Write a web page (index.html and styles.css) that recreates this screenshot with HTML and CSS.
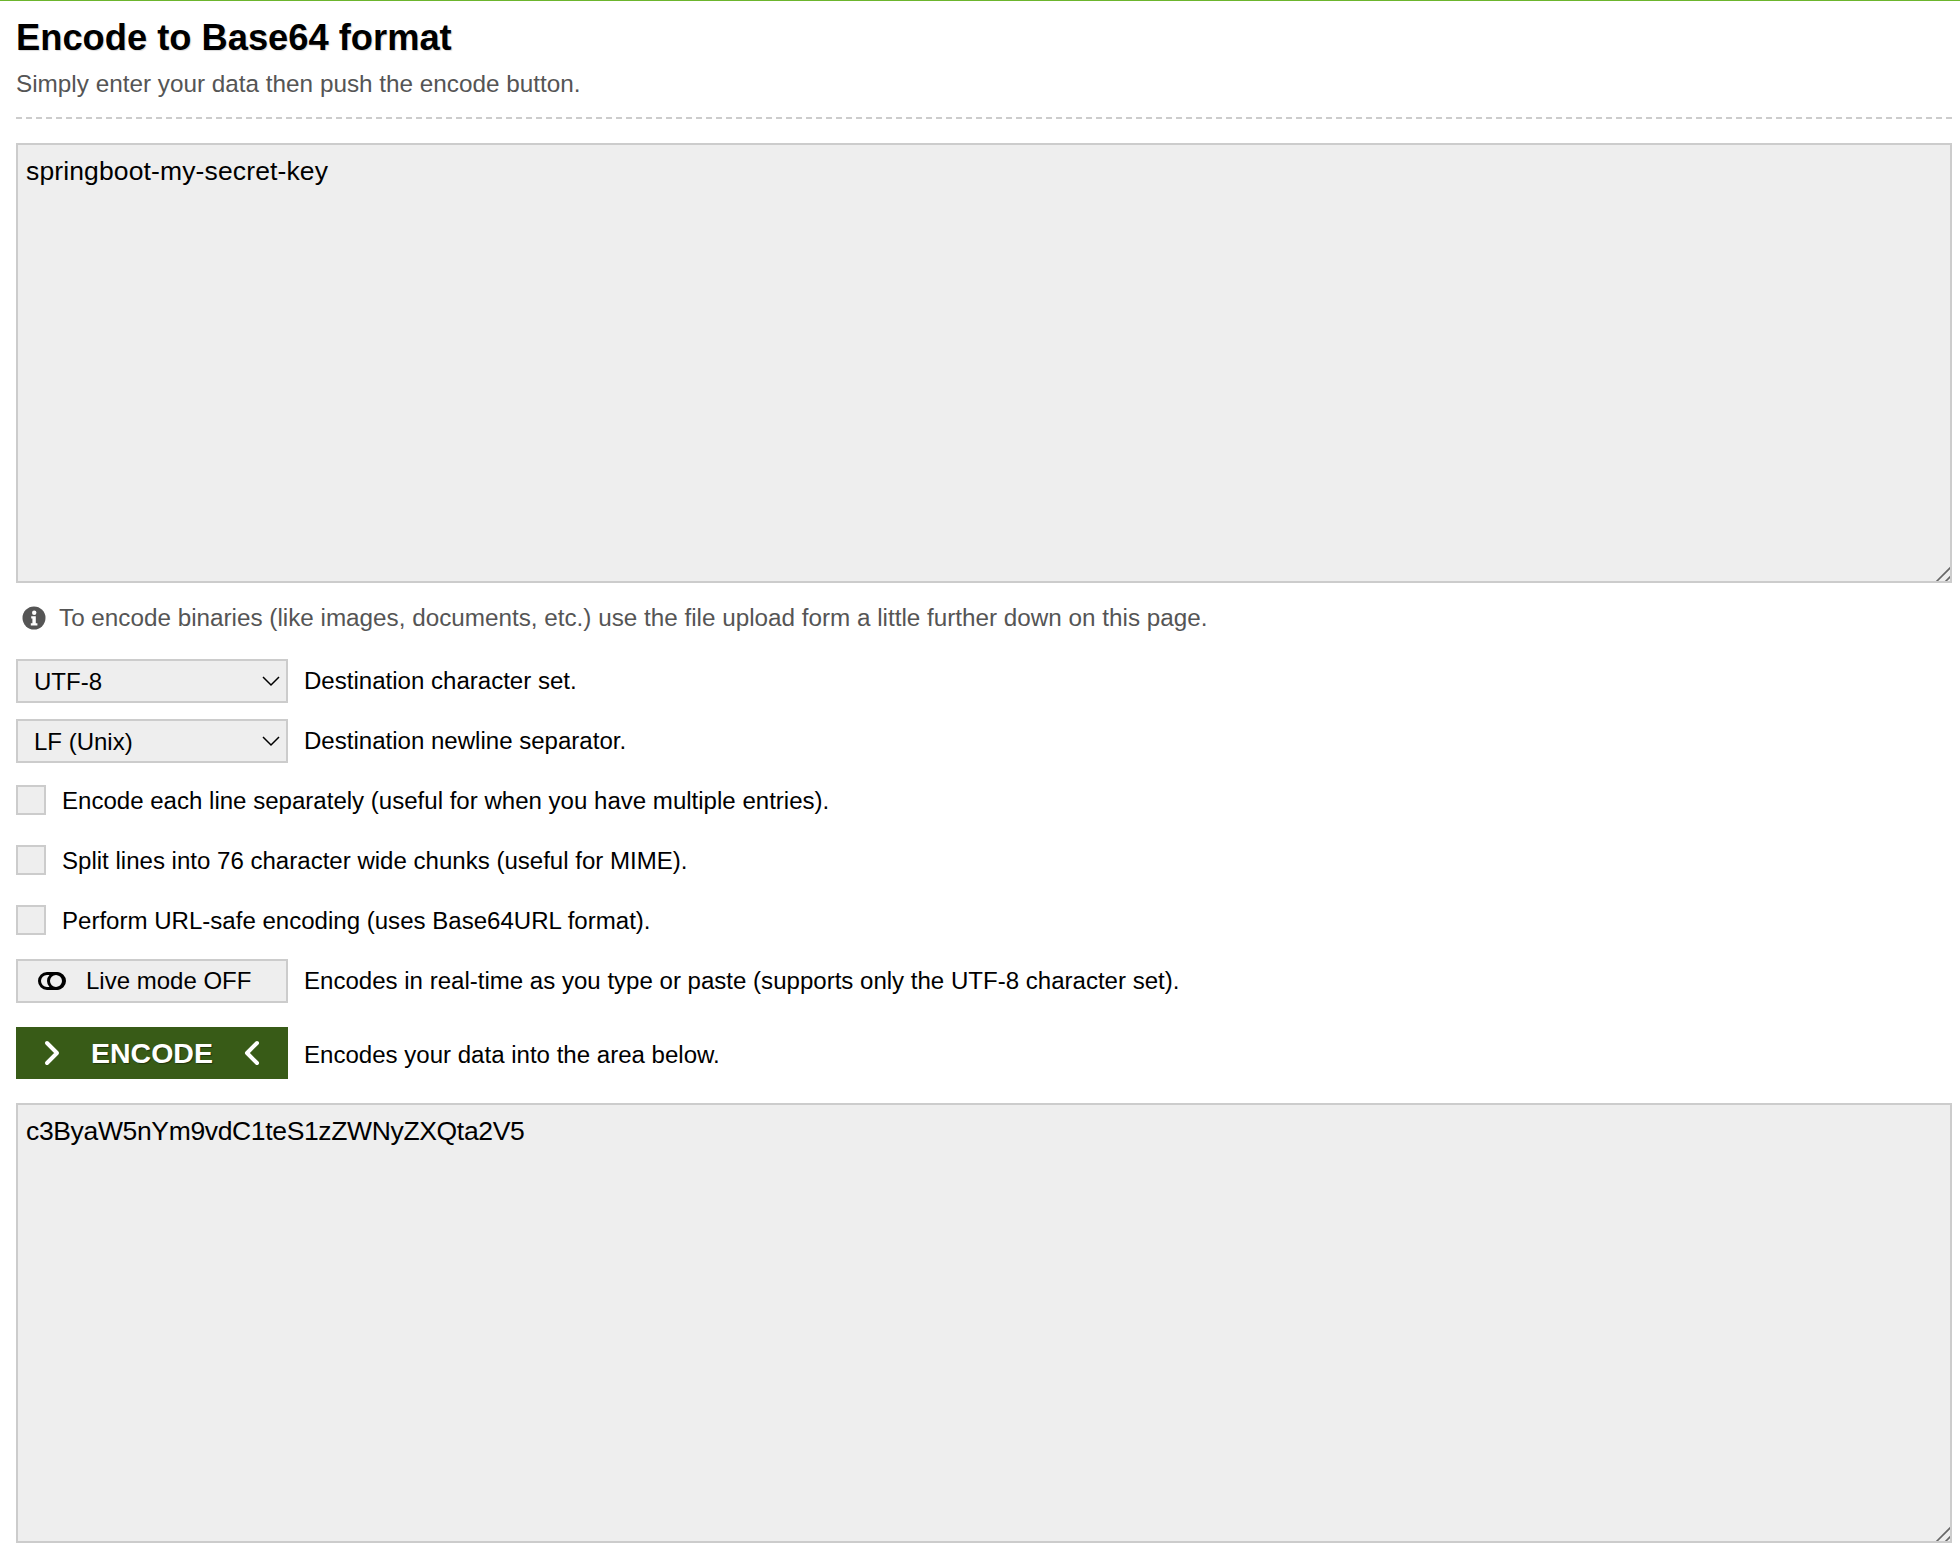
FILE: index.html
```html
<!DOCTYPE html>
<html lang="en">
<head>
  <meta charset="UTF-8" />
  <title>Encode to Base64 format</title>
  <link rel="stylesheet" href="styles.css">
</head>
<body>
  <div class="container">
    <h1>Encode to Base64 format</h1>
    <p class="subtitle">Simply enter your data then push the encode button.</p>
    <form id="encodeForm">
      <textarea class="data-area input-area" spellcheck="false">springboot-my-secret-key</textarea>
      <p class="info">
        <svg class="info-icon" viewBox="0 0 24 24" width="24" height="24">
          <circle cx="12" cy="12" r="11.5" fill="#555"/>
          <circle cx="12.2" cy="6.8" r="2.2" fill="#fff"/>
          <path d="M9.2 10.2h4.6v7h1.6v2.3H8.8v-2.3h1.6v-4.7H9.2z" fill="#fff"/>
        </svg>
        To encode binaries (like images, documents, etc.) use the file upload form a little further down on this page.
      </p>
      <div class="form-row">
        <select class="control">
          <option>UTF-8</option>
        </select>
        <label>Destination character set.</label>
      </div>
      <div class="form-row">
        <select class="control">
          <option>LF (Unix)</option>
        </select>
        <label>Destination newline separator.</label>
      </div>
      <div class="form-row">
        <input type="checkbox" id="eachLine" />
        <label for="eachLine">Encode each line separately (useful for when you have multiple entries).</label>
      </div>
      <div class="form-row">
        <input type="checkbox" id="chunks" />
        <label for="chunks">Split lines into 76 character wide chunks (useful for MIME).</label>
      </div>
      <div class="form-row">
        <input type="checkbox" id="urlSafe" />
        <label for="urlSafe">Perform URL-safe encoding (uses Base64URL format).</label>
      </div>
      <div class="form-row">
        <button type="button" class="control live-btn">
          <svg viewBox="0 0 28 18" width="28" height="18" fill="none" stroke="#000" stroke-width="3">
            <rect x="1.5" y="1.5" width="25" height="15" rx="7.5"/>
            <circle cx="18" cy="9" r="7.5"/>
          </svg>
          Live mode OFF
        </button>
        <label>Encodes in real-time as you type or paste (supports only the UTF-8 character set).</label>
      </div>
      <div class="form-row submit-row">
        <button type="submit" class="encode-btn">
          <svg viewBox="0 0 16 26" width="16" height="26" fill="none" stroke="#fff" stroke-width="4" stroke-linecap="round" stroke-linejoin="round">
            <path d="M3 3l10 10L3 23"/>
          </svg>
          ENCODE
          <svg viewBox="0 0 16 26" width="16" height="26" fill="none" stroke="#fff" stroke-width="4" stroke-linecap="round" stroke-linejoin="round">
            <path d="M13 3L3 13l10 10"/>
          </svg>
        </button>
        <label>Encodes your data into the area below.</label>
      </div>
      <textarea class="data-area output-area" spellcheck="false">c3ByaW5nYm9vdC1teS1zZWNyZXQta2V5</textarea>
    </form>
  </div>
</body>
</html>
```

FILE: styles.css
```css
* {
  box-sizing: border-box;
}

body {
  margin: 0;
  font-family: "Liberation Sans", Arial, sans-serif;
  font-size: 24.05px;
  color: #000;
  background: white;
  border-top: 1px solid #6cb52d;
}

.container {
  padding: 0 8px 0 16px;
}

h1 {
  margin: 0;
  padding-top: 16px;
  font-size: 36.3px;
  line-height: 41px;
  font-weight: bold;
  text-shadow: 1px 1px 1px rgba(0,0,0,0.15);
}

.subtitle {
  margin: 10px 0 0;
  padding-bottom: 17px;
  font-size: 24.3px;
  line-height: 32px;
  color: #555;
  border-bottom: 2px dashed #ccc;
}

.data-area {
  display: block;
  width: 100%;
  height: 440px;
  margin-top: 24px;
  padding: 10px 8px;
  font-family: inherit;
  font-size: 26.5px;
  line-height: 32px;
  color: #000;
  background: #eee;
  border: 2px solid #ccc;
  border-radius: 0;
  outline: none;
}

.input-area {
  letter-spacing: 0.13px;
}

.output-area {
  letter-spacing: -0.35px;
}

/* bigger grip than the browser default */
.data-area::-webkit-scrollbar {
  width: 17px;
  height: 17px;
}

.data-area::-webkit-resizer {
  background: url("data:image/svg+xml,%3Csvg xmlns='http://www.w3.org/2000/svg' width='17' height='17'%3E%3Cpath d='M1 16L16 1M10 16l6-6' fill='none' stroke='%23666' stroke-width='1.6'/%3E%3C/svg%3E") no-repeat;
}

.info {
  display: flex;
  align-items: center;
  gap: 13px;
  height: 44px;
  margin: 13px 0 19px;
  padding-left: 6px;
  font-size: 24.25px;
  color: #555;
}

.form-row {
  display: flex;
  align-items: center;
  height: 44px;
  margin-bottom: 16px;
}

.form-row label {
  margin-left: 16px;
}

.control {
  width: 272px;
  height: 44px;
  font-family: inherit;
  font-size: 24px;
  color: #000;
  background-color: #eee;
  border: 2px solid #ccc;
  border-radius: 0;
}

select.control {
  appearance: none;
  padding: 0 16px;
  background-image: url("data:image/svg+xml,%3Csvg xmlns='http://www.w3.org/2000/svg' width='18' height='11'%3E%3Cpath d='M1 1l8 8 8-8' fill='none' stroke='%23000' stroke-width='1.5'/%3E%3C/svg%3E");
  background-repeat: no-repeat;
  background-position: right 6px center;
}

input[type="checkbox"] {
  appearance: none;
  width: 30px;
  height: 30px;
  margin: 0 0 2px;
  background: #eee;
  border: 2px solid #ccc;
}

.live-btn {
  display: flex;
  align-items: center;
  gap: 20px;
  padding: 0 0 0 20px;
}

.submit-row {
  height: 52px;
  margin-top: 24px;
  margin-bottom: 0;
}

.submit-row label {
  padding-top: 3px;
}

.encode-btn {
  display: flex;
  align-items: center;
  justify-content: space-between;
  width: 272px;
  height: 52px;
  padding: 0 28px;
  font-family: inherit;
  font-size: 28.5px;
  font-weight: bold;
  color: white;
  background: #385b17;
  border: none;
  text-shadow: 1px 1px 1px rgba(0,0,0,0.4);
}
```
